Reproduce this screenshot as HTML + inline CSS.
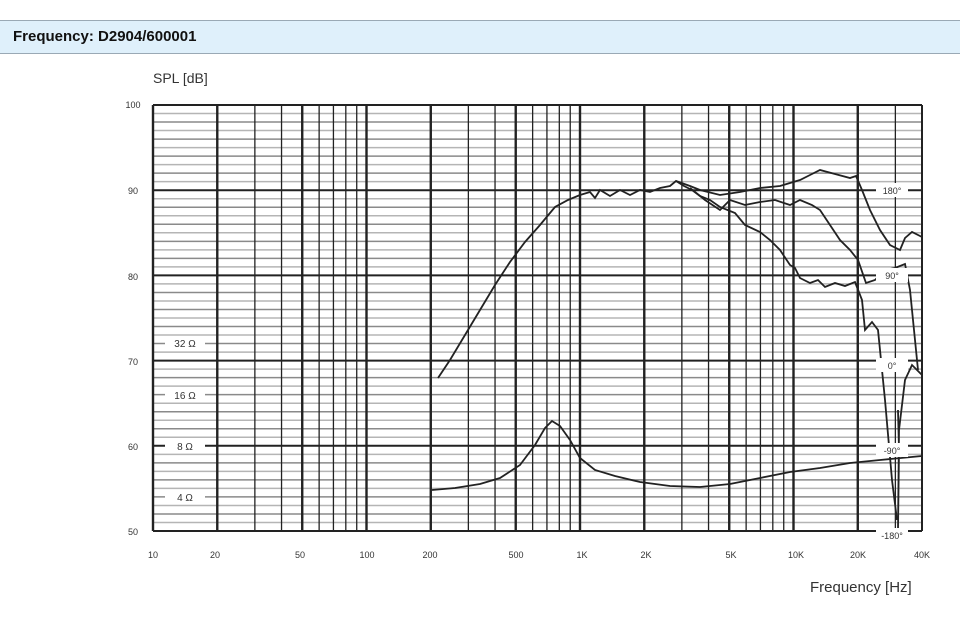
<!DOCTYPE html>
<html><head><meta charset="utf-8"><style>
body{margin:0;width:960px;height:638px;background:#fff;font-family:"Liberation Sans",sans-serif;overflow:hidden;position:relative}
.hdr{position:absolute;left:0;top:20px;width:960px;height:32px;background:#dff0fb;border-top:1px solid #9aa9b5;border-bottom:1px solid #9aa9b5}
.hdr span{position:absolute;left:13px;top:7px;font-weight:bold;font-size:15px;color:#111}
svg{position:absolute;left:0;top:0}
</style></head><body>
<div class="hdr"><span>Frequency: D2904/600001</span></div>
<svg id="c" width="960" height="638" font-family="Liberation Sans, sans-serif"></svg>
<script>
var s=document.getElementById('c'),h='';
var X0=153,X1=922,Y0=105,Y1=531,D=213.5;
function fx(f){return X0+D*Math.log10(f/10);}
function fy(db){return Y1-(db-50)*(Y1-Y0)/50;}
for(var d=51;d<100;d++){if(d%10==0)continue;var y=fy(d);h+='<line x1="'+X0+'" x2="'+X1+'" y1="'+y+'" y2="'+y+'" stroke="'+(d%2==0?'#8a8a8a':'#b5b5b5')+'" stroke-width="1.5"/>';}
for(var d=50;d<=100;d+=10){var y=fy(d);h+='<line x1="'+X0+'" x2="'+X1+'" y1="'+y+'" y2="'+y+'" stroke="#222" stroke-width="2"/>';}
var dec=[10,100,1000,10000];
dec.forEach(function(b){for(var m=1;m<=9;m++){var f=b*m;if(f>40000)break;var x=fx(f);var thick=(m==1||m==2||m==5);h+='<line x1="'+x+'" x2="'+x+'" y1="'+Y0+'" y2="'+Y1+'" stroke="#222" stroke-width="'+(thick?2.4:1.3)+'"/>';}});
h+='<line x1="'+X1+'" x2="'+X1+'" y1="'+Y0+'" y2="'+Y1+'" stroke="#222" stroke-width="2"/>';
function pl(p){h+='<polyline fill="none" stroke="#222" stroke-width="1.8" points="'+p+'"/>';}
pl("438,378 450,360 465,335 480,310 495,285 510,262 525,242 540,225 555,207 568,200 580,195 590,192 595,198 600,190 610,196 620,190 630,195 640,190 650,192 660,188 670,186 676,181 684,186 692,190 700,196 710,200 720,207 735,213 745,225 760,232 770,240 780,250 790,265 795,268 800,278 810,283 818,280 825,287 835,283 845,286 855,282 862,300 865,330 872,322 878,330 885,400 892,480 897,520");
pl("676,181 690,186 700,190 720,195 740,192 760,188 780,186 800,180 810,175 820,170 835,174 850,178 856,176 862,190 870,210 880,230 890,245 900,250 905,238 912,232 922,237");
pl("690,188 705,200 720,210 730,200 745,205 760,202 775,200 790,205 800,200 812,205 820,210 830,225 840,240 850,250 858,260 866,283 875,280 885,270 895,268 905,264 910,290 915,340 918,370");
pl("898,410 899,450 898,530 899,430 905,380 912,365 922,375");
pl("432,490 455,488 480,484 500,478 520,465 535,445 545,428 552,421 560,426 570,440 580,458 595,470 615,476 640,482 670,486 700,487 730,484 760,478 790,472 820,468 850,463 880,460 922,456");
function t(x,y,txt,sz,anc){h+='<text x="'+x+'" y="'+y+'" font-size="'+sz+'" fill="#333" text-anchor="'+(anc||'start')+'">'+txt+'</text>';}
t(153,83,"SPL [dB]",14);
[[100,105],[90,191],[80,277],[70,362],[60,447],[50,532]].forEach(function(a){t(133,a[1]+3,a[0],9,'middle');});
[["32 Ω",343],["16 Ω",395],["8 Ω",446],["4 Ω",497]].forEach(function(a){h+='<rect x="165" y="'+(a[1]-7)+'" width="40" height="14" fill="#fff"/>';t(185,a[1]+4,a[0],10,'middle');});
[["180°",190],["90°",275],["0°",365],["-90°",450],["-180°",535]].forEach(function(a){h+='<rect x="876" y="'+(a[1]-7)+'" width="32" height="14" fill="#fff"/>';t(892,a[1]+4,a[0],9,'middle');});
[["10",153],["20",215],["50",300],["100",367],["200",430],["500",516],["1K",582],["2K",646],["5K",731],["10K",796],["20K",858],["40K",922]].forEach(function(a){t(a[1],558,a[0],9,'middle');});
t(810,592,"Frequency  [Hz]",15);
s.innerHTML=h;
</script>
</body></html>
